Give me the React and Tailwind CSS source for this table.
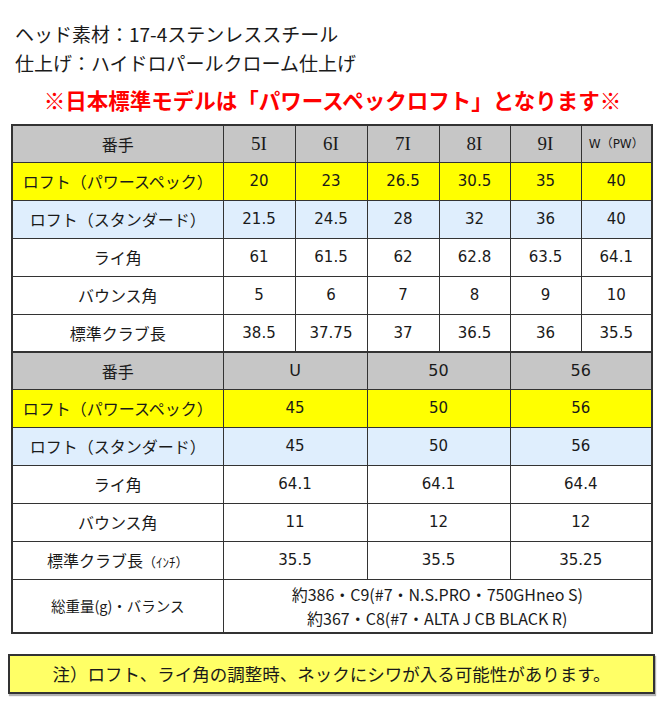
import React from 'react'

const jp = "font-['Noto_Sans_CJK_JP',sans-serif]"
const num = "font-['DejaVu_Sans','Noto_Sans_CJK_JP',sans-serif]"

const ironCols = ['5I', '6I', '7I', '8I', '9I']

const ironRows = [
  { label: 'ロフト（パワースペック）', bg: 'bg-[#ffff00]', values: ['20', '23', '26.5', '30.5', '35', '40'] },
  { label: 'ロフト（スタンダード）', bg: 'bg-[#dfeefd]', values: ['21.5', '24.5', '28', '32', '36', '40'] },
  { label: 'ライ角', bg: 'bg-white', values: ['61', '61.5', '62', '62.8', '63.5', '64.1'] },
  { label: 'バウンス角', bg: 'bg-white', values: ['5', '6', '7', '8', '9', '10'] },
  { label: '標準クラブ長', bg: 'bg-white', values: ['38.5', '37.75', '37', '36.5', '36', '35.5'] },
]

const wedgeRows = [
  { label: 'ロフト（パワースペック）', bg: 'bg-[#ffff00]', values: ['45', '50', '56'] },
  { label: 'ロフト（スタンダード）', bg: 'bg-[#dfeefd]', values: ['45', '50', '56'] },
  { label: 'ライ角', bg: 'bg-white', values: ['64.1', '64.1', '64.4'] },
  { label: 'バウンス角', bg: 'bg-white', values: ['11', '12', '12'] },
]

const cell = 'border border-[#333] text-center align-middle p-0'

function LabelCell({ children }) {
  return <td className={`${cell} ${jp} text-[16px]`}>{children}</td>
}

export default function App() {
  return (
    <div className="w-[665px] h-[720px] bg-white text-[#1a1a1a]">
      <div className={`${jp} pl-[15px] pt-[19px] text-[19px] leading-[29px]`}>
        <div>ヘッド素材：17-4ステンレススチール</div>
        <div>仕上げ：ハイドロパールクローム仕上げ</div>
      </div>
      <div className={`${jp} mt-[8px] text-center text-[21.5px] leading-[30px] font-bold text-[#ff0000]`}>
        ※日本標準モデルは「パワースペックロフト」となります※
      </div>

      <table className="mt-[9px] ml-[11px] w-[641px] table-fixed border-collapse border-2 border-[#333]">
        <colgroup>
          <col className="w-[211px]" />
          <col className="w-[72px]" />
          <col className="w-[72px]" />
          <col className="w-[72px]" />
          <col className="w-[71px]" />
          <col className="w-[71px]" />
          <col className="w-[71px]" />
        </colgroup>
        <tbody>
          <tr className="h-[37px] bg-[#c6c6c6]">
            <td className={`${cell} ${jp} text-[16px]`}>番手</td>
            {ironCols.map((c) => (
              <td key={c} className={`${cell} font-['Liberation_Serif',serif] text-[19px]`}>
                {c}
              </td>
            ))}
            <td className={`${cell} ${num} text-[12px]`}>W（PW）</td>
          </tr>
          {ironRows.map((row) => (
            <tr key={row.label} className={`h-[38px] ${row.bg}`}>
              <LabelCell>{row.label}</LabelCell>
              {row.values.map((v, i) => (
                <td key={i} className={`${cell} ${num} text-[15px]`}>
                  {v}
                </td>
              ))}
            </tr>
          ))}

          <tr className="h-[37px] bg-[#c6c6c6] border-t-2 border-[#333]">
            <td className={`${cell} ${jp} text-[16px]`}>番手</td>
            {['U', '50', '56'].map((c) => (
              <td key={c} colSpan={2} className={`${cell} ${num} text-[16px]`}>
                {c}
              </td>
            ))}
          </tr>
          {wedgeRows.map((row) => (
            <tr key={row.label} className={`h-[38px] ${row.bg}`}>
              <LabelCell>{row.label}</LabelCell>
              {row.values.map((v, i) => (
                <td key={i} colSpan={2} className={`${cell} ${num} text-[15px]`}>
                  {v}
                </td>
              ))}
            </tr>
          ))}
          <tr className="h-[38px] bg-white">
            <LabelCell>
              標準クラブ長<span className="text-[13px]">（ｲﾝﾁ）</span>
            </LabelCell>
            {['35.5', '35.5', '35.25'].map((v, i) => (
              <td key={i} colSpan={2} className={`${cell} ${num} text-[15px]`}>
                {v}
              </td>
            ))}
          </tr>
          <tr className="h-[54px] bg-white">
            <td className={`${cell} ${jp} text-[14.5px]`}>総重量(g)・バランス</td>
            <td colSpan={6} className={`${cell} ${jp} text-[16px] leading-[24px]`}>
              <div>約386・C9(#7・N.S.PRO・750GHneo S)</div>
              <div>約367・C8(#7・ALTA J CB BLACK R)</div>
            </td>
          </tr>
        </tbody>
      </table>

      <div
        className={`${jp} mt-[20px] ml-[8px] w-[647px] h-[40px] flex items-center justify-center border-2 border-[#333] bg-[#ffff66] text-[17.5px] shadow-[1px_2px_1px_rgba(0,0,0,0.3)]`}
      >
        注）ロフト、ライ角の調整時、ネックにシワが入る可能性があります。
      </div>
    </div>
  )
}
